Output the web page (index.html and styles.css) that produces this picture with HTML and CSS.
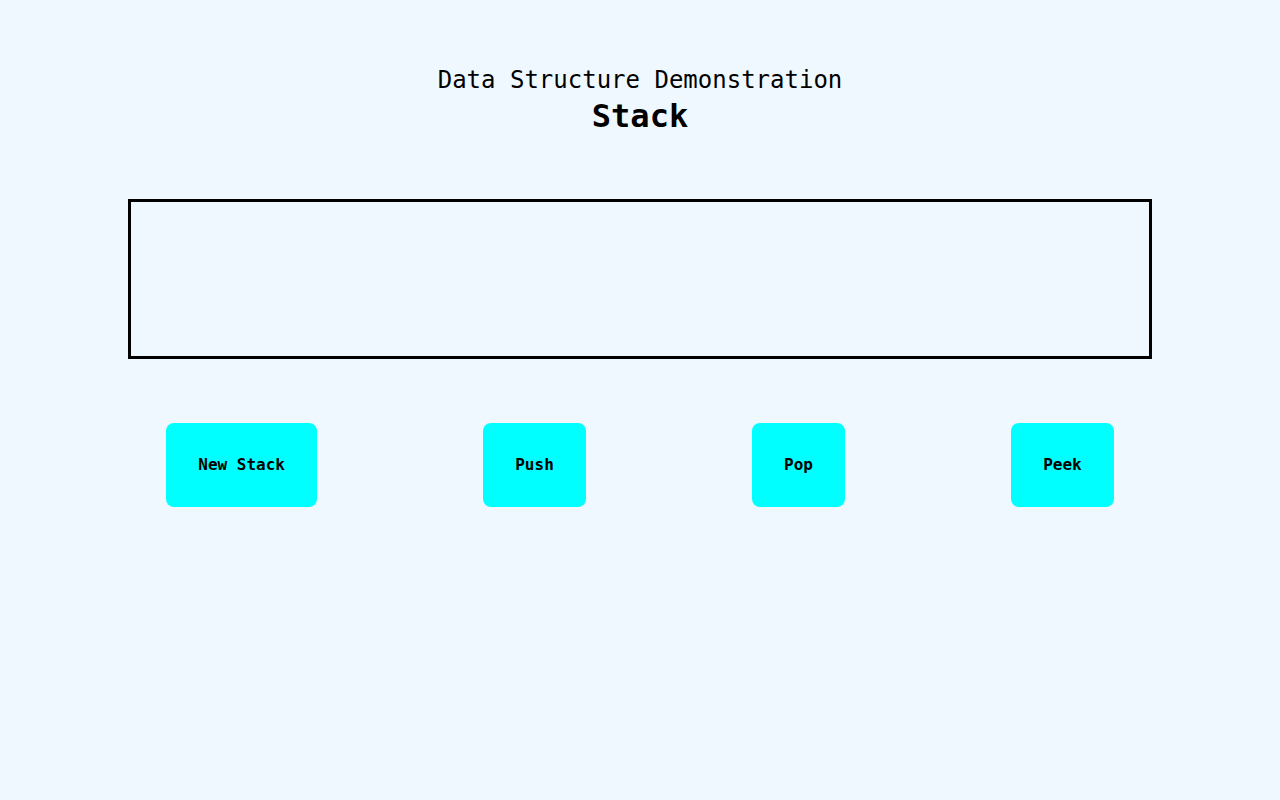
FILE: index.html
```html
<!DOCTYPE html>
<html lang="en">
<head>
    <meta charset="UTF-8">
    <title>Stack</title>
    <link rel="stylesheet" href="styles.css">
</head>
<body>
    <header class="title">
        <h2>Data Structure Demonstration</h2>
        <h1>Stack</h1>
    </header>

    <div class="stack-box" id="stack"></div>

    <div class="controls">
        <button type="button">New Stack</button>
        <button type="button">Push</button>
        <button type="button">Pop</button>
        <button type="button">Peek</button>
    </div>
</body>
</html>
```

FILE: styles.css
```css
body {
    margin: 0;
    background-color: aliceblue;
    font-family: "DejaVu Sans Mono", monospace;
    color: black;
}
.title {
    text-align: center;
    padding-top: 64px;
}
.title h2 {
    font-size: 24px;
    font-weight: normal;
    margin: 0;
    line-height: 32px;
}
.title h1 {
    font-size: 32px;
    margin: 0;
    line-height: 40px;
}
.stack-box {
    width: 1018px;
    height: 154px;
    margin: 63px auto 0;
    border: 3px solid black;
}
.controls {
    display: flex;
    justify-content: space-evenly;
    margin-top: 64px;
}
.controls button {
    font-family: "DejaVu Sans Mono", monospace;
    font-size: 16px;
    line-height: 20px;
    font-weight: bold;
    background-color: aqua;
    border: none;
    border-radius: 8px;
    padding: 32px;
    cursor: pointer;
}
```
